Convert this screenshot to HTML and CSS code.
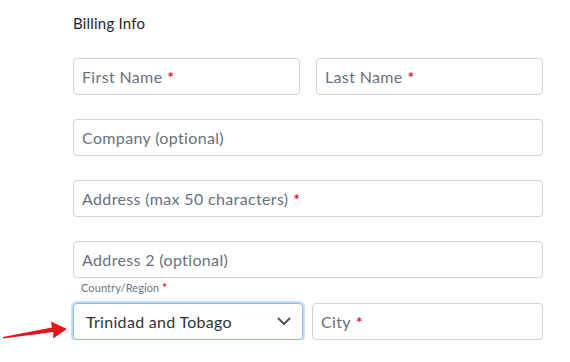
FILE: index.html
```html
<!DOCTYPE html>
<html lang="en">
<head>
    <meta charset="UTF-8">
    <meta name="viewport" content="width=device-width, initial-scale=1.0">
    <title>Billing Info</title>
    <link rel="stylesheet" href="styles.css">
</head>
<body>
    <div class="form">
        <h2 class="title">Billing Info</h2>

        <div class="row">
            <div class="field">First Name <span class="req">*</span></div>
            <div class="field">Last Name <span class="req">*</span></div>
        </div>

        <div class="field">Company (optional)</div>
        <div class="field">Address (max 50 characters) <span class="req">*</span></div>
        <div class="field">Address 2 (optional)</div>

        <div class="label">Country/Region <span class="req">*</span></div>
        <div class="row row-tight">
            <div class="select">
                <span>Trinidad and Tobago</span>
                <svg class="chevron" width="14" height="9" viewBox="0 0 14 9">
                    <path d="M1.5 1.5 L7 7 L12.5 1.5" fill="none" stroke="#4a4f55" stroke-width="1.8" stroke-linecap="round" stroke-linejoin="round"/>
                </svg>
            </div>
            <div class="field">City <span class="req">*</span></div>
        </div>
    </div>

    <svg class="arrow" width="72" height="24" viewBox="0 318 72 24">
        <polygon points="3,337 52,327.5 51,321.5 67,329 53,338.5 53.5,332 3,338.4" fill="#e3141b"/>
    </svg>
</body>
</html>
```

FILE: styles.css
```css
body {
    margin: 0;
    font-family: 'Lato', 'Open Sans', sans-serif;
    background: #fff;
    color: #333;
}

.form {
    width: 470px;
    padding: 13px 0 0 73px;
}

.title {
    font-size: 15px;
    font-weight: 400;
    color: #1f2328;
    margin: 0 0 25px;
    line-height: 20px;
    letter-spacing: 0.2px;
}

.row {
    display: flex;
    gap: 16px;
    margin-bottom: 24px;
}

.row .field {
    flex: 1;
    margin-bottom: 0;
}

.row-tight {
    gap: 9px;
    margin-bottom: 0;
}

.field {
    box-sizing: border-box;
    height: 37px;
    border: 1px solid #cdd3da;
    border-radius: 4px;
    padding: 0 8px;
    display: flex;
    align-items: center;
    font-size: 16px;
    letter-spacing: 0.35px;
    color: #67717d;
    margin-bottom: 24px;
}

.req {
    color: #e4141b;
    font-weight: 700;
    font-size: 15px;
    margin-left: 5px;
}

.label {
    font-size: 11px;
    color: #6b7580;
    padding-left: 8px;
    margin: -21px 0 8px;
    line-height: 14px;
    letter-spacing: 0.1px;
}

.label .req {
    font-size: 11px;
    margin-left: 0;
}

.select {
    box-sizing: border-box;
    width: 230px;
    height: 37px;
    border: 1px solid #86b7f3;
    border-radius: 4px;
    box-shadow: 0 0 0 2px #c7ddf8;
    padding: 0 11px 0 12px;
    display: flex;
    align-items: center;
    justify-content: space-between;
    font-size: 16px;
    letter-spacing: 0.3px;
    color: #2f3338;
}

.select + .field {
    flex: 1;
}

.arrow {
    position: absolute;
    left: 0;
    top: 318px;
}
```
